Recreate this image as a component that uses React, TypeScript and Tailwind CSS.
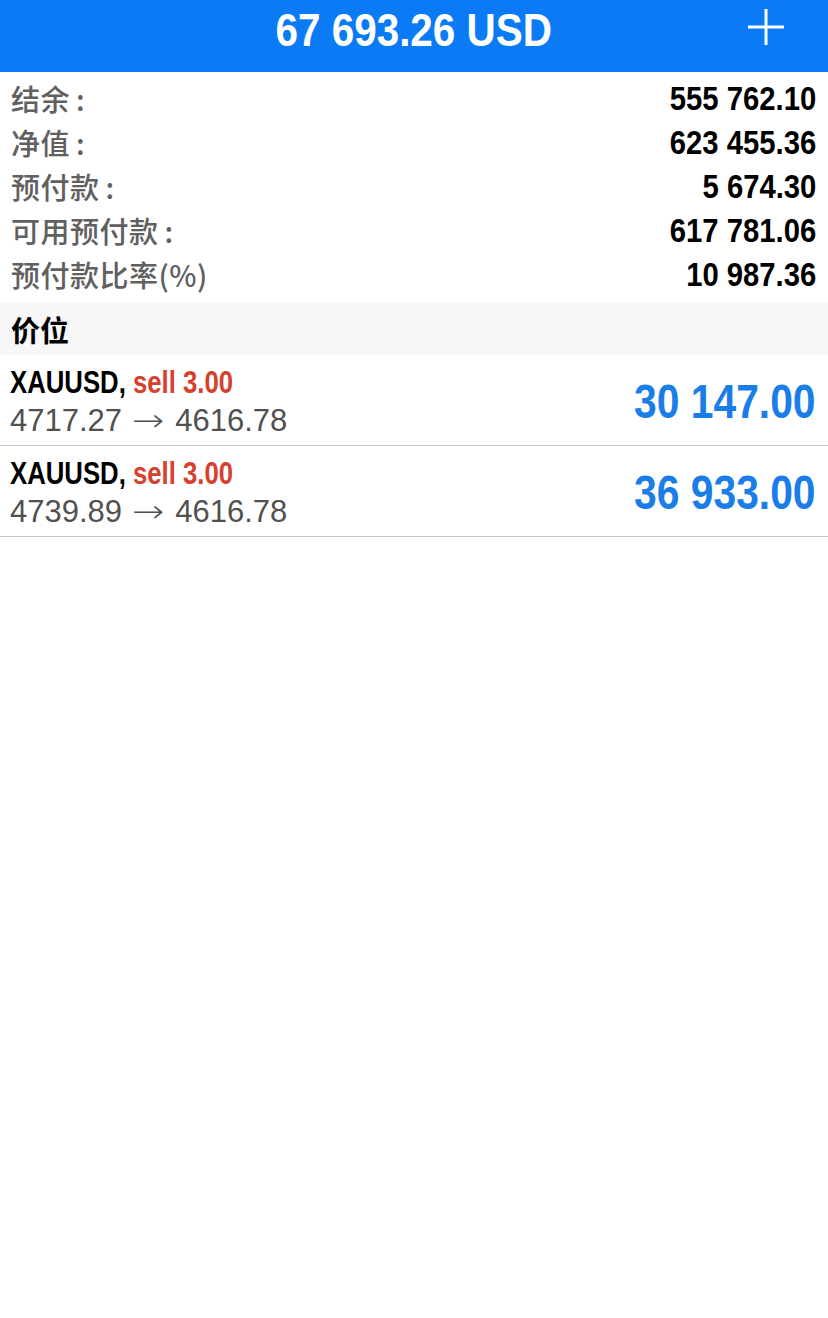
import React from "react";

// Helvetica Condensed stand-in: Liberation Sans Bold squeezed horizontally
const num = "font-['Liberation_Sans',sans-serif] font-bold inline-block leading-none";
const cjk = "font-['Noto_Sans_CJK_SC','Liberation_Sans',sans-serif]";

const summary = [
  { label: "结余", colon: true, value: "555 762.10" },
  { label: "净值", colon: true, value: "623 455.36" },
  { label: "预付款", colon: true, value: "5 674.30" },
  { label: "可用预付款", colon: true, value: "617 781.06" },
  { label: "预付款比率(%)", colon: false, value: "10 987.36" },
];

const positions = [
  { symbol: "XAUUSD,", side: "sell 3.00", open: "4717.27", current: "4616.78", profit: "30 147.00" },
  { symbol: "XAUUSD,", side: "sell 3.00", open: "4739.89", current: "4616.78", profit: "36 933.00" },
];

export default function App() {
  return (
    <div className="w-[828px] h-[1318px] bg-white flex flex-col">
      {/* Top bar */}
      <header className="h-[72px] bg-[#0a7af5] flex items-center justify-center relative shrink-0 pb-[14px]">
        <h1 className={`${num} text-white text-[47px] scale-x-[0.86]`}>67 693.26 USD</h1>
        <button className="absolute right-[43px] top-[8px] w-[38px] h-[38px]" aria-label="Add">
          <svg width="38" height="38" viewBox="0 0 38 38" fill="none" stroke="white" strokeWidth="3" aria-hidden="true">
            <line x1="19" y1="1" x2="19" y2="37" />
            <line x1="1" y1="19" x2="37" y2="19" />
          </svg>
        </button>
      </header>

      {/* Account summary */}
      <section className="pt-[4px] pb-[7px]">
        {summary.map((row) => (
          <div key={row.label} className="h-[44px] flex items-center justify-between pl-[11px] pr-[12px]">
            <span className={`${cjk} text-[29px] font-medium text-[#606060] leading-none tracking-[0.5px]`}>
              {row.label}
              {row.colon && <span className="ml-[6px]">:</span>}
            </span>
            <span className={`${num} text-[34px] text-black scale-x-[0.86] origin-right`}>{row.value}</span>
          </div>
        ))}
      </section>

      {/* Positions header */}
      <div className="h-[52px] bg-[#f7f7f7] flex items-center pl-[11px]">
        <span className={`${cjk} text-[29px] font-bold text-black leading-none`}>价位</span>
      </div>

      {/* Positions */}
      {positions.map((p, i) => (
        <div key={i} className="h-[91px] flex items-center justify-between pl-[10px] pr-[12px] border-b border-[#c8c8c8]">
          <div className="flex flex-col gap-[7px] pt-[2px]">
            <div className={`${num} text-[31px] scale-x-[0.83] origin-left whitespace-nowrap`}>
              <span className="text-black">{p.symbol}</span>{" "}
              <span className="text-[#d6412f]">{p.side}</span>
            </div>
            <div className="font-['Liberation_Sans',sans-serif] text-[31px] text-[#505050] leading-none whitespace-nowrap">
              {p.open}{" "}
              <span className="inline-block ml-[4px] mr-[6px] scale-x-[1.25] font-['DejaVu_Sans',sans-serif] font-light">→</span>{" "}
              {p.current}
            </div>
          </div>
          <span className={`${num} text-[48px] text-[#1a7de8] scale-x-[0.85] origin-right mt-[4px]`}>{p.profit}</span>
        </div>
      ))}
    </div>
  );
}
